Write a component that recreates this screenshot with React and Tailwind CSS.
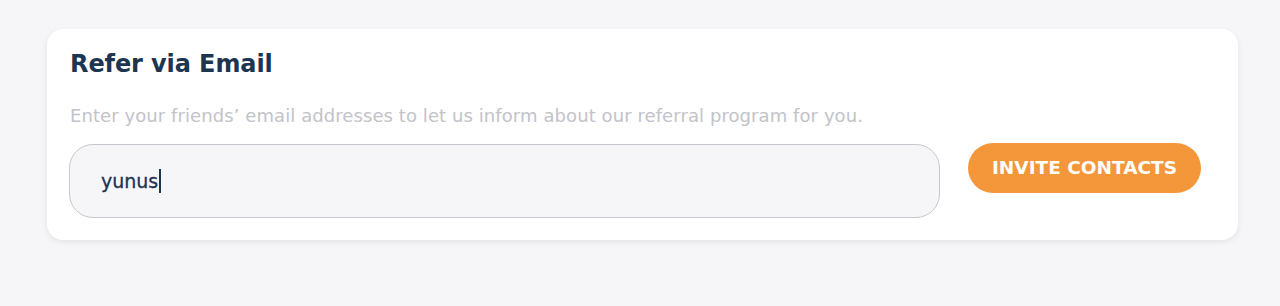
export default function App() {
  return (
    <div className="min-h-[306px] w-full bg-[#f6f6f8] pt-[29px] pl-[47px] pr-[42px]" style={{ fontFamily: "'DejaVu Sans', 'Noto Sans', sans-serif" }}>
      <div className="rounded-[16px] bg-white pt-[19px] pb-[22px] pl-[22px] pr-[37px] shadow-[0_2px_6px_rgba(0,0,0,0.08)]">
        <h2 className="text-[24px] leading-[32px] font-bold tracking-[-0.1px] text-[#1c3550] pl-px">Refer via Email</h2>
        <p className="mt-[24px] text-[18px] leading-[24px] tracking-[0.08px] text-[#c2c3c9] pl-px">
          Enter your friends’ email addresses to let us inform about our referral program for you.
        </p>
        <div className="mt-[16px] flex items-start gap-[28px]">
          <div className="flex h-[74px] flex-1 items-center rounded-[24px] border border-[#c7c7cf] bg-[#f6f6f8] pl-[31px]">
            <span className="text-[19px] text-[#1c3550] [-webkit-text-stroke:0.3px_#1c3550]">yunus</span>
            <span className="ml-px inline-block h-[24px] w-[1.5px] bg-[#1c3550]" />
          </div>
          <button className="mt-[-1px] h-[50px] w-[233px] rounded-full bg-[#f4963a] text-[18.5px] font-bold text-white">
            INVITE CONTACTS
          </button>
        </div>
      </div>
    </div>
  );
}
